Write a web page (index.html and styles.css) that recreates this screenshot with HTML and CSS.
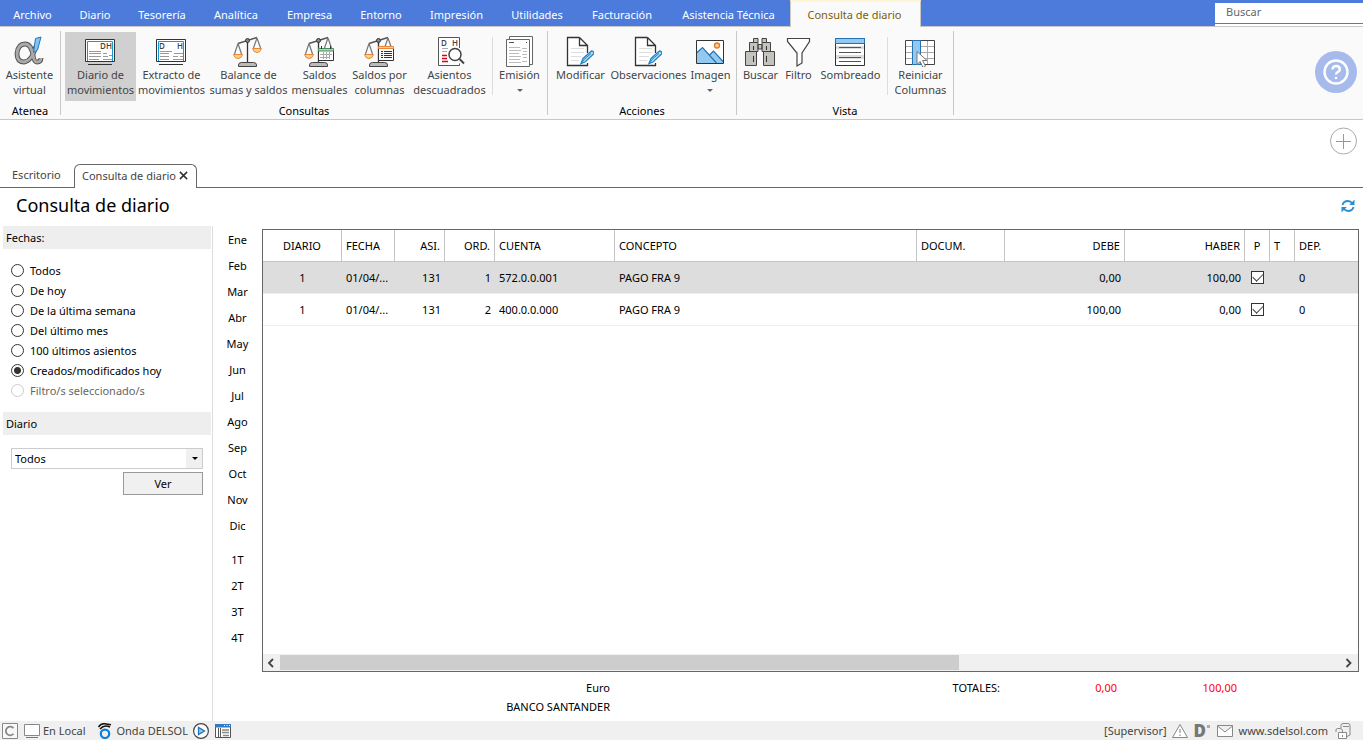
FILE: index.html
```html
<!DOCTYPE html>
<html lang="es">
<head>
<meta charset="utf-8">
<title>Consulta de diario</title>
<link rel="stylesheet" href="styles.css">
</head>
<body>
<svg class="defs" aria-hidden="true">
  <symbol id="scale" viewBox="0 0 32 32">
    <path d="M15.500 6v21" stroke="#333" stroke-width="1.300" fill="none"/>
    <path d="M6 8.500L25 2.500" stroke="#555" stroke-width="1.500" fill="none"/>
    <circle cx="15.500" cy="5.500" r="2" fill="#888" stroke="#333"/>
    <path d="M6 8.500L2.500 19M6 8.500L9.500 19M25 3L21.500 13M25 3L28.500 13" stroke="#777" stroke-width="1.200" fill="none"/>
    <path d="M1.500 19.500h9q-1 4-4.500 4t-4.500-4zM20.500 13.500h9q-1 4-4.500 4t-4.500-4z" fill="#fbd38a" stroke="#e8873a"/>
    <path d="M6.500 31.500V30q0-2.500 3-2.500h12q3 0 3 2.500v1.500z" fill="#bbb" stroke="#444"/>
  </symbol>
  <symbol id="note" viewBox="0 0 28 32">
    <path d="M13.500 2.500H1.500v28h20V28M13.500 2.500l8 8V18M13.500 2.500v8h8" fill="#fff" stroke="#333" stroke-width="1.300"/>
    <path d="M5 13.500h13M5 17.500h13M5 21.500h10M5 25.500h8" stroke="#ddd"/>
    <path d="M15 28.500l2-5 8.500-7.500q3 .5 2 3l-8.500 8z" fill="#b5dcf5" stroke="#2387c6" stroke-width="1.300"/>
    <path d="M15 29l3-4.500 7-6" stroke="#2387c6" fill="none"/>
  </symbol>
</svg>

<header class="menubar">
  <nav class="menu">
    <button>Archivo</button><button>Diario</button><button>Tesorería</button><button>Analítica</button><button>Empresa</button><button>Entorno</button><button>Impresión</button><button>Utilidades</button><button>Facturación</button><button>Asistencia Técnica</button><button class="current">Consulta de diario</button>
  </nav>
  <input class="search" type="text" placeholder="Buscar" aria-label="Buscar">
</header>

<section class="ribbon">
  <div class="group atenea">
    <div class="tools">
      <button class="tool"><svg viewBox="0 0 32 32"><path d="M23 11Q19 26 11 27 4 27 4 18.500 5 9 12 9q6 0 8 11 1 7 4 7 4 0 4-4" fill="none" stroke="#555" stroke-width="4.800"/><path d="M23 11Q19 26 11 27 4 27 4 18.500 5 9 12 9q6 0 8 11 1 7 4 7 4 0 4-4" fill="none" stroke="#aaa" stroke-width="2.800"/><path d="M22.500 3.500l5.500-1.500-3.500 13-4 2.500z" fill="#86c5ef" stroke="#2476b8"/></svg><span>Asistente<br>virtual</span></button>
    </div>
    <h2>Atenea</h2>
  </div>
  <div class="group consultas">
    <div class="tools">
      <button class="tool pressed"><svg viewBox="0 0 32 32"><path d="M1.500 4.500h29v22h-29z" fill="#fff" stroke="#333"/><path d="M3.500 26V6.500h25V26" fill="none" stroke="#1599d6"/><path d="M4 29.500h24" stroke="#333"/><path d="M5 16.500h12M5 18.500h12M5 21.500h12M5 24.500h10M19 18.500h4M25 20.500h3M19 21.500h5M19 24.500h9" stroke="#999"/><text x="16" y="14">D</text><text x="22" y="14">H</text></svg><span>Diario de<br>movimientos</span></button>
      <button class="tool"><svg viewBox="0 0 32 32"><path d="M1.500 4.500h29v22h-29z" fill="#fff" stroke="#333"/><path d="M3.500 26V6.500h25V26" fill="none" stroke="#1599d6"/><path d="M4 29.500h24" stroke="#333"/><path d="M5 16.500h12M5 18.500h9M5 21.500h9M5 24.500h9M19 18.500h9M18 21.500h5M18 24.500h10M25 21.500h3" stroke="#999"/><text x="4" y="14">D</text><text x="22" y="14">H</text></svg><span>Extracto de<br>movimientos</span></button>
      <button class="tool"><svg viewBox="0 0 32 32"><use href="#scale"/></svg><span>Balance de<br>sumas y saldos</span></button>
      <button class="tool"><svg viewBox="0 0 32 32"><use href="#scale"/><path d="M15.500 14.500h15v11h-15z" fill="#fff" stroke="#333"/><path d="M15.500 13.500h15V16h-15z" fill="#a7d8b5" stroke="#4b8d61"/><path d="M17 19.500h12M17 22.500h10M20.500 17v7M23.500 17v7M26.500 17v7" stroke="#aaa"/><path d="M18.500 11v3M27.500 11v3" stroke="#333"/></svg><span>Saldos<br>mensuales</span></button>
      <button class="tool"><svg viewBox="0 0 32 32"><use href="#scale"/><path d="M15.500 13.500h15v12h-15z" fill="#fff" stroke="#333"/><path d="M15.500 11.500h15v2h-15z" fill="#fbd38a" stroke="#e8873a"/><path d="M18 16.500h2M21 16.500h8M18 18.500h2M21 18.500h8M18 20.500h2M21 20.500h8M18 22.500h2M21 22.500h8" stroke="#333"/></svg><span>Saldos por<br>columnas</span></button>
      <button class="tool"><svg viewBox="-1 0 32 32"><path d="M25.500 13V2.500h-21v28h21V28.500" fill="#fff" stroke="#555"/><text x="7" y="11">D</text><text x="18" y="11">H</text><path d="M8 13.500h6M8 16.500h5" stroke="#aaa"/><path d="M8 20.500h5M8 23.500h5M8 26.500h6" stroke="#d8001b" stroke-width="1.300"/><circle cx="21" cy="19.500" r="6" fill="#fff" stroke="#444" stroke-width="1.500"/><path d="M25.500 24l4.500 4.500" stroke="#444" stroke-width="2"/></svg><span>Asientos<br>descuadrados</span></button>
      <span class="divider"></span>
      <button class="tool"><svg viewBox="-1 0 32 32"><path d="M5.500 1.500h23v28h-23z" fill="#fff" stroke="#666"/><path d="M2.500 4.500h23v27h-23z" fill="#fff" stroke="#666"/><path d="M5 7.500h5M22 7.500h1" stroke="#555"/><path d="M5 12.500h11M5 15.500h12M5 18.500h10M5 21.500h12M5 24.500h11M5 27.500h12M18 13.500h5M19 16.500h4M18 19.500h5M19 22.500h4M18 26.500h5" stroke="#bbb"/></svg><span>Emisión<i class="caret"></i></span></button>
    </div>
    <h2>Consultas</h2>
  </div>
  <div class="group acciones">
    <div class="tools">
      <button class="tool"><svg class="page" viewBox="0 0 28 32"><use href="#note"/></svg><span>Modificar</span></button>
      <button class="tool"><svg class="page" viewBox="0 0 28 32"><use href="#note"/></svg><span>Observaciones</span></button>
      <button class="tool"><svg viewBox="0 0 32 32"><path d="M2.500 5.500h27v23h-27z" fill="#fff"/><path d="M2.500 17l6-4.500 7 7 3.500-3.500 10.500 11v1.500h-27z" fill="#93c9f0"/><path d="M2.500 18l6-5.500 14 15.500M15.500 20l4-4 10 11" fill="none" stroke="#2474b5" stroke-width="1.200"/><path d="M2.500 5.500h27v23h-27z" fill="none" stroke="#333"/><circle cx="23" cy="10.500" r="2.500" fill="#fbd38a" stroke="#e8762a" stroke-width="1.300"/></svg><span>Imagen<i class="caret"></i></span></button>
    </div>
    <h2>Acciones</h2>
  </div>
  <div class="group vista">
    <div class="tools">
      <button class="tool"><svg viewBox="0 0 32 32"><path d="M1.500 16.500h11v14h-11zM19.500 16.500h11v14h-11zM5.500 7.500H14v9H5.500zM18 7.500h8.500v9H18zM9.500 3.500H14v4H9.500zM18 3.500h4.500v4H18zM14 9.500h4V14h-4z" fill="#c4c2bf" stroke="#444"/><path d="M9.500 21v6M22.500 21v6M9.500 11v4M22.500 11v4" stroke="#333"/></svg><span>Buscar</span></button>
      <button class="tool"><svg viewBox="-1 0 32 32"><path d="M4.500 3.500h22v3L19 18V28l-5 3V18L4.500 6.500z" fill="#fff" stroke="#444" stroke-width="1.200"/></svg><span>Filtro</span></button>
      <button class="tool"><svg viewBox="0 0 32 32"><path d="M1.500 3.500h29v27h-29z" fill="#fff" stroke="#333"/><path d="M2 11h28v3H2zM2 20h28v4H2z" fill="#ddd"/><path d="M5 12.500h22M5 17.500h22M5 22.500h22M5 26.500h22" stroke="#555"/><path d="M1.500 3.500h29v5h-29z" fill="#93c9f0" stroke="#2474b5"/></svg><span>Sombreado</span></button>
      <span class="divider"></span>
      <button class="tool"><svg viewBox="0 0 32 32"><path d="M1.500 5.500h29v24h-29z" fill="#fff" stroke="#444"/><path d="M2 11.500h28M2 17.500h28M2 23.500h28M23.500 6v23" stroke="#aaa"/><path d="M8.500 5.500h8v24h-8z" fill="#93c9f0" stroke="#2474b5"/><path d="M13 16.500v13l3-3 3 6 2.500-1.500-3-5.500h4.500z" fill="#fff" stroke="#777"/></svg><span>Reiniciar<br>Columnas</span></button>
    </div>
    <h2>Vista</h2>
  </div>
  <button class="help" aria-label="Ayuda"><svg viewBox="0 0 42 42"><circle cx="21" cy="21" r="11.500" fill="none" stroke="#fff" stroke-width="2.400"/><path d="M17.500 18.500q.3-3.500 3.700-3.500 3.600.2 3.600 3.200 0 2-2.400 3-1.400.8-1.400 2.300" fill="none" stroke="#fff" stroke-width="2.400"/><circle cx="21" cy="27" r="1.300" fill="#fff"/></svg></button>
</section>

<div class="tabstrip">
  <button class="tab">Escritorio</button>
  <div class="tab open">Consulta de diario<button class="close" aria-label="Cerrar"><svg viewBox="0 0 10 10"><path d="M1 1l8 8M9 1L1 9" stroke="#333" stroke-width="1.700"/></svg></button></div>
  <button class="add" aria-label="Añadir"><svg viewBox="0 0 28 28"><circle cx="13.500" cy="14" r="13" fill="none" stroke="#aaa"/><path d="M6 14.500h15M13.500 7v15" stroke="#999"/></svg></button>
</div>

<div class="heading">
  <h1>Consulta de diario</h1>
  <button class="refresh" aria-label="Actualizar"><svg viewBox="0 0 14 14"><path d="M1.500 6Q2.500 2 7 2q2.500 0 4.500 2.500M12.500 8Q11.500 12 7 12q-2.500 0-4.500-2.500" fill="none" stroke="#2a8fd0" stroke-width="1.900"/><path d="M13.500.5V6H8.200zM.500 13.500V8h5.300z" fill="#2a8fd0"/></svg></button>
</div>

<main class="work">
  <aside class="filters">
    <h3>Fechas:</h3>
    <div class="radios">
      <label><input type="radio" name="fecha">Todos</label>
      <label><input type="radio" name="fecha">De hoy</label>
      <label><input type="radio" name="fecha">De la última semana</label>
      <label><input type="radio" name="fecha">Del último mes</label>
      <label><input type="radio" name="fecha">100 últimos asientos</label>
      <label><input type="radio" name="fecha" checked>Creados/modificados hoy</label>
      <label class="off"><input type="radio" name="fecha" disabled>Filtro/s seleccionado/s</label>
    </div>
    <h3>Diario</h3>
    <div class="journal">
      <div class="combo"><select aria-label="Diario"><option>Todos</option></select></div>
      <button class="view">Ver</button>
    </div>
  </aside>
  <nav class="periods">
    <button>Ene</button><button>Feb</button><button>Mar</button><button>Abr</button><button>May</button><button>Jun</button><button>Jul</button><button>Ago</button><button>Sep</button><button>Oct</button><button>Nov</button><button>Dic</button>
    <button class="quarter">1T</button><button>2T</button><button>3T</button><button>4T</button>
  </nav>
  <section class="results">
    <div class="grid">
      <table>
        <colgroup><col class="w79"><col class="w53"><col class="w50"><col class="w50"><col class="w120"><col><col class="w88"><col class="w120"><col class="w120"><col class="w25"><col class="w25"><col class="w63"></colgroup>
        <thead><tr><th class="mid">DIARIO</th><th>FECHA</th><th class="num">ASI.</th><th class="num">ORD.</th><th>CUENTA</th><th>CONCEPTO</th><th>DOCUM.</th><th class="num">DEBE</th><th class="num">HABER</th><th class="mid">P</th><th>T</th><th>DEP.</th></tr></thead>
        <tbody>
          <tr class="selected"><td class="mid">1</td><td>01/04/...</td><td class="num">131</td><td class="num">1</td><td>572.0.0.001</td><td>PAGO FRA 9</td><td></td><td class="num">0,00</td><td class="num">100,00</td><td class="mid"><input type="checkbox" checked aria-label="Punteado"></td><td></td><td>0</td></tr>
          <tr><td class="mid">1</td><td>01/04/...</td><td class="num">131</td><td class="num">2</td><td>400.0.0.000</td><td>PAGO FRA 9</td><td></td><td class="num">100,00</td><td class="num">0,00</td><td class="mid"><input type="checkbox" checked aria-label="Punteado"></td><td></td><td>0</td></tr>
        </tbody>
      </table>
      <div class="scroll">
        <button aria-label="Izquierda"><svg viewBox="0 0 8 10"><path d="M6 1L2 5l4 4" fill="none" stroke="#444" stroke-width="1.800"/></svg></button>
        <div class="track"><div class="thumb"></div></div>
        <button aria-label="Derecha"><svg viewBox="0 0 8 10"><path d="M1.500 1l4 4-4 4" fill="none" stroke="#444" stroke-width="1.800"/></svg></button>
      </div>
    </div>
    <div class="totals">
      <span>Euro</span><span>TOTALES:</span><span class="red">0,00</span><span class="red">100,00</span>
      <span class="bank">BANCO SANTANDER</span>
    </div>
  </section>
</main>

<footer class="status">
  <svg class="s16" viewBox="0 0 16 16"><path d="M.500.500h15v15H.500z" fill="#f8f8f8" stroke="#888"/><path d="M11.500 5.300A4.300 4.300 0 1 0 11.500 10.700" fill="none" stroke="#888" stroke-width="1.800"/></svg>
  <svg class="s16 screen" viewBox="0 0 16 16"><path d="M.500 1.500h15v11H.500z" fill="#fff" stroke="#888"/><path d="M2 14.500h12" stroke="#777"/></svg>
  <span>En Local</span>
  <svg class="s16 wave" viewBox="0 0 16 16"><path d="M1.500 4Q4 .3 7.500.8t6.500 1M3 6Q6 3 8.500 3T13 4" fill="none" stroke="#111" stroke-width="1.600"/><circle cx="8" cy="10.800" r="4.200" fill="none" stroke="#0c7fd8" stroke-width="2.200"/></svg>
  <span>Onda DELSOL</span>
  <svg class="s16 play" viewBox="0 0 16 16"><circle cx="8" cy="8" r="7.400" fill="#fff" stroke="#444" stroke-width="1.200"/><path d="M5.500 4.500v7l6-3.500z" fill="#93c9f0" stroke="#2474b5" stroke-width="1.300"/></svg>
  <svg class="s16 panel" viewBox="0 0 16 16"><path d="M.500 1.500h15v13H.500z" fill="#fff" stroke="#555"/><path d="M0 1h16v3.500H0z" fill="#2e7cc2"/><path d="M9 2.500h1M11.500 2.500h1M14 2.500h1" stroke="#fff"/><path d="M3.500 5v9M5.500 5v9" stroke="#555"/><path d="M7 7h7M7 9.500h7M8 12.500h6" stroke="#888" stroke-width="1.700"/></svg>
  <span class="user">[Supervisor]</span>
  <svg class="s16 warn" viewBox="0 0 16 16"><path d="M8 1.500L15.500 14.500H.500z" fill="#fff" stroke="#888"/><path d="M8 6v4M8 11.500v1.500" stroke="#777"/></svg>
  <b class="brand">D<sup></sup></b>
  <svg class="s16 mail" viewBox="0 0 16 16"><path d="M.500 2.500h15v11H.500zM.500 3L8 9l7.500-6" fill="#fff" stroke="#888"/></svg>
  <a href="#">www.sdelsol.com</a>
  <svg class="s16 lock" viewBox="0 0 16 16"><path d="M6 5V2.500q0-2 2-2h5q2 0 2 2V12l-3 1.500M8 3.500h6" fill="none" stroke="#888"/><path d="M3.500 9.500h8v6h-8z" fill="#fff" stroke="#888"/><path d="M1 9V7q0-1.500 1.500-1.500H5Q7.500 5.500 7.500 8v1.500M7.500 12v2" fill="none" stroke="#888"/></svg>
</footer>
</body>
</html>
```
FILE: styles.css
```css
* { box-sizing: border-box; }
body {
  margin: 0;
  min-height: 100vh;
  display: flex;
  flex-direction: column;
  background: #fff;
  color: #000;
  font: 11px/15px "Noto Sans", "Open Sans", sans-serif;
}
button, input, select { font: inherit; color: inherit; }
button { margin: 0; padding: 0; border: 0; background: none; }
svg { display: block; flex: none; }
h1, h2, h3 { margin: 0; font-weight: 400; }
.defs { position: absolute; width: 0; height: 0; }

/* Menu bar */
.menubar {
  display: flex;
  justify-content: space-between;
  align-items: flex-end;
  height: 27px;
  background: #4c7bdb;
  border-bottom: 1px solid #c8c8c8;
}
.menu {
  display: grid;
  grid-template-columns: 65px 60px 74px 74px 73px 70px 81px 80px 90px 123px 131px;
  height: 27px;
  margin-bottom: -1px;
}
.menu button { color: #fff; padding-top: 2px; white-space: nowrap; }
.menu .current {
  background: #fafafa;
  color: #7d5c0c;
  border-top: 2px solid #fdf5d3;
  border-left: 1px solid #c8c8c8;
  border-right: 1px solid #c8c8c8;
  padding: 0 2px 0 0;
}
.search {
  width: 148px;
  height: 21px;
  margin-bottom: 2px;
  padding: 0 11px 3px;
  border: 0;
  border-bottom: 1px solid #777;
  border-radius: 0;
  background: #fff;
  box-shadow: 0 2px #fff;
}
.search::placeholder { color: #666; opacity: 1; }

/* Ribbon */
.ribbon {
  display: flex;
  height: 93px;
  background: #fafafa;
  border-bottom: 1px solid #c8c8c8;
}
.group {
  display: flex;
  flex-direction: column;
  margin: 4px 0;
  border-right: 1px solid #c8c8c8;
}
.tools { display: grid; flex: none; height: 70px; padding-top: 1px; }
.atenea .tools { grid-template-columns: 59px; padding-right: 1px; }
.consultas .tools { grid-template-columns: 71px 71px 83px 59px 61px 79px 4px 53px; padding: 1px 1px 0 4px; }
.acciones .tools { grid-template-columns: 55px 81px 43px; padding: 1px 4px 0 5px; }
.vista .tools { grid-template-columns: 39px 37px 67px 4px 65px; padding-left: 4px; }
.group h2 { margin-top: 3px; font-size: 11px; text-align: center; line-height: 14px; }
.tool {
  display: flex;
  flex-direction: column;
  align-items: center;
  padding-top: 3px;
  color: #444;
  white-space: nowrap;
}
.tool svg { width: 32px; height: 32px; margin-right: 1px; }
.tool .page { width: 28px; }
.tool text { font: 600 8px "Open Sans", sans-serif; fill: #444; }
.tool.pressed { background: #d0d0d0; }
.divider { width: 1px; justify-self: end; background: #ddd; margin: 5px 0 6px; }
.caret {
  display: block;
  width: 6px;
  margin: 7px auto 0;
  border: 3px solid transparent;
  border-top-color: #666;
  border-bottom: 0;
}
.help {
  width: 42px;
  height: 42px;
  margin: 24px 6px 0 auto;
  border-radius: 50%;
  background: #a6bbeb;
}

/* Document tabs */
.tabstrip {
  display: flex;
  align-items: flex-end;
  height: 68px;
  border-bottom: 1px solid #666;
}
.tab { height: 24px; color: #444; padding: 0 12px 1px; width: 74px; white-space: nowrap; text-align: left; }
.open {
  display: flex;
  align-items: center;
  gap: 3px;
  width: 123px;
  padding: 0 7px 3px;
  margin-bottom: -1px;
  background: #fff;
  border: 1px solid #666;
  border-bottom: 0;
  border-radius: 6px 6px 0 0;
}
.close svg { width: 9px; height: 9px; }
.add { align-self: flex-start; margin: 7px 5px 0 auto; }
.add svg { width: 28px; height: 28px; }

.heading {
  display: flex;
  justify-content: space-between;
  align-items: center;
  height: 38px;
  padding: 0 8px 2px 16px;
}
h1 { padding-bottom: 2px; font-size: 18px; line-height: 24px; }
.refresh svg { width: 14px; height: 14px; }

/* Work area */
.work { display: flex; flex: 1; }
.filters { width: 213px; padding-left: 3px; border-right: 1px solid #ddd; }
.filters h3 { margin-right: 1px; padding: 4px 3px; font-size: 11px; line-height: 15px; background: #eee; }
.radios { padding: 11px 0 12px 8px; }
.radios label { display: flex; align-items: center; gap: 6px; height: 20px; }
.radios input {
  appearance: none;
  width: 13px;
  height: 13px;
  margin: 0;
  border: 1px solid #333;
  border-radius: 50%;
  background: #fff;
}
.radios input:checked { background: radial-gradient(circle, #333 3px, #fff 4px); }
.radios .off { color: #666; }
.radios .off input { border-color: #ccc; }
.journal { display: flex; flex-direction: column; gap: 3px; padding: 13px 9px 0 8px; }
.combo { position: relative; }
.combo::after {
  content: "";
  position: absolute;
  right: 5px;
  top: 9px;
  border: 3px solid transparent;
  border-top-color: #000;
  border-bottom: 0;
}
.combo select {
  appearance: none;
  display: block;
  width: 100%;
  height: 21px;
  padding: 0 3px;
  border: 1px solid #ccc;
  border-radius: 0;
  background: linear-gradient(90deg, #fff calc(100% - 16px), #f0f0f0 0);
}
.view { align-self: flex-end; width: 80px; height: 23px; background: #f0f0f0; border: 1px solid #999; }
.periods { display: flex; flex-direction: column; width: 49px; }
.periods button { height: 26px; }
.periods .quarter { margin-top: 8px; }

/* Results */
.results { display: flex; flex-direction: column; flex: 1; min-width: 0; padding: 3px 4px 5px 0; }
.grid { display: flex; flex-direction: column; justify-content: space-between; flex: 1; border: 1px solid #666; }
table { width: 100%; table-layout: fixed; border-collapse: separate; border-spacing: 0; }
th, td { height: 32px; padding: 0 4px; font-weight: 400; text-align: left; white-space: nowrap; }
th { border-right: 1px solid #c4c4c4; border-bottom: 1px solid #c4c4c4; }
th:last-child { border-right: 0; }
td { border-bottom: 1px solid #eee; }
.selected td { background: #ddd; }
.num { text-align: right; }
.mid { text-align: center; }
.w79 { width: 79px; }
.w53 { width: 53px; }
.w50 { width: 50px; }
.w120 { width: 120px; }
.w88 { width: 88px; }
.w25 { width: 25px; }
.w63 { width: 63px; }
td input {
  appearance: none;
  display: block;
  width: 13px;
  height: 13px;
  margin: 0 auto;
  border: 1px solid #333;
  background: #fff;
  position: relative;
}
td input:checked::after {
  content: "";
  position: absolute;
  left: 1px;
  top: 1px;
  width: 9px;
  height: 5px;
  border: solid #444;
  border-width: 0 0 1px 1px;
  transform: rotate(-45deg);
}
.scroll { display: flex; height: 17px; background: #f0f0f0; }
.scroll button { display: flex; align-items: center; padding: 0 4px; width: 17px; }
.scroll svg { width: 8px; height: 10px; }
.track { flex: 1; }
.thumb { width: 64%; height: 15px; margin-top: 1px; background: #cdcdcd; }
.totals {
  display: grid;
  grid-template-columns: 348px 1fr 117px 120px;
  padding: 6px 122px 0 0;
  line-height: 19px;
  text-align: right;
}
.red { color: #f00; }

/* Status bar */
.status {
  display: flex;
  align-items: center;
  height: 19px;
  padding: 0 12px 0 2px;
  background: #f0f0f0;
  color: #444;
}
.s16 { width: 16px; height: 16px; }
.screen { margin: 0 3px 0 6px; }
.wave { margin: 0 3px 0 12px; }
.play { margin-left: 5px; }
.panel { margin-left: 6px; }
.user { margin-left: auto; }
.warn { margin: 0 6px 0 5px; }
.brand { display: flex; gap: 1px; width: 18px; font-size: 17px; font-weight: 900; line-height: 18px; color: #777; }
.brand sup { width: 3px; height: 3px; margin-top: 3px; background: #aaa; }
.mail { margin: 0 6px 0 5px; }
.status a { color: inherit; text-decoration: none; }
.lock { margin-left: 7px; }
```
